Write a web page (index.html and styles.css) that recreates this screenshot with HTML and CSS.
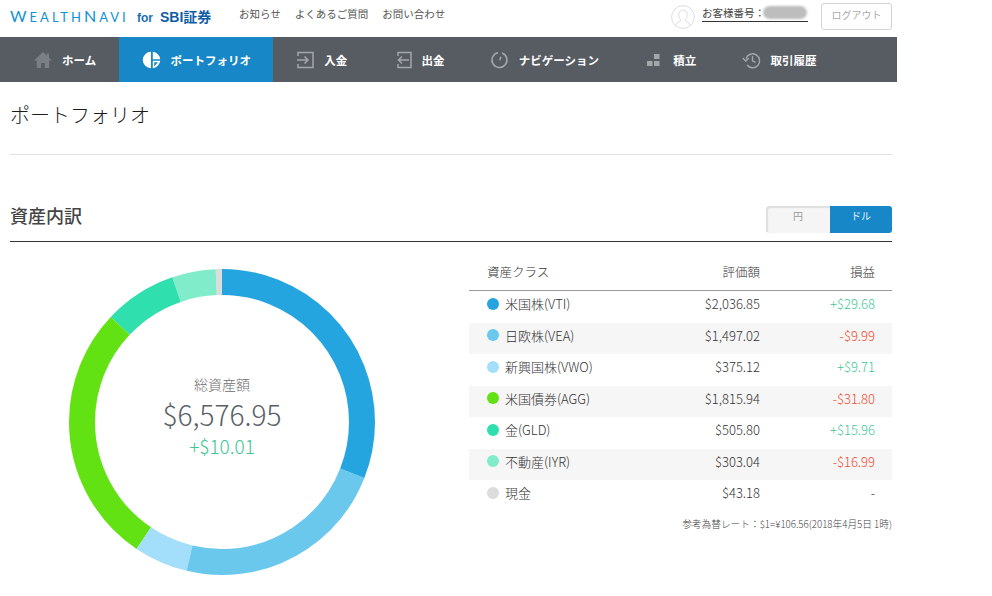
FILE: index.html
```html
<!DOCTYPE html>
<html lang="ja">
<head>
<meta charset="utf-8">
<title>ポートフォリオ</title>
<link rel="stylesheet" href="styles.css">
</head>
<body>
<div class="page">
  <header class="topbar">
    <div class="logo"><span class="wn">W<small>EALTH</small>N<small>AVI</small></span><span class="for">for</span><span class="sbi">SBI証券</span></div>
    <nav class="sublinks"><a>お知らせ</a><a>よくあるご質問</a><a>お問い合わせ</a></nav>
    <div class="account">
      <svg class="avatar" viewBox="0 0 24 24" width="24" height="24" fill="none" stroke="#cfcfcf" stroke-width="0.7"><circle cx="12" cy="12" r="11.4"/><path d="M5 20.500c.3-2.500 1.500-3 3.500-3.700 1.200-.5 1.500-1 1.300-2-1.300-1.300-2-3-2-5 0-2.800 1.700-4.800 4.200-4.800s4.200 2 4.200 4.800c0 2-.7 3.700-2 5-.2 1 .1 1.500 1.300 2 2 .7 3.200 1.200 3.500 3.700"/></svg>
      <span class="cust"><span class="custlabel">お客様番号：</span><i class="mask"></i></span>
      <button class="logout">ログアウト</button>
    </div>
  </header>
  <nav class="mainnav">
    <a class="item first"><svg class="ic" viewBox="0 0 18 18" fill="#7b7f84"><path d="M9 1 0 9.500h2.800V17h4.400v-5h3.600v5h4.400V9.500H18l-3-2.800V2.500h-2.200v2.100z"/></svg>ホーム</a>
    <a class="item active"><svg class="ic" viewBox="0 0 18 18"><path fill="#fff" d="M8 .8v16.400A8.200 8.200 0 0 1 8 .8zM9.800.8a8.200 8.200 0 0 1 7.400 7.400H9.800z"/><path fill="#fff" fill-rule="evenodd" d="M9.800 9.800h7.400a8.200 8.200 0 0 1-7.400 7.400zM11.200 11.200v4.400l3.800-4.400z"/></svg>ポートフォリオ</a>
    <a class="item"><svg class="ic" viewBox="0 0 18 18" fill="none" stroke="#a4a7aa" stroke-width="1.500"><path d="M1 5V1.500h15v15H1V13"/><path d="M0 9h10.500M7.500 5.500 11 9l-3.500 3.500"/></svg>入金</a>
    <a class="item"><svg class="ic" viewBox="0 0 18 18" fill="none" stroke="#a4a7aa" stroke-width="1.500"><path d="M4 5V1.500h13v15H4V13"/><path d="M15 9H4.500M8 5.500 4.500 9 8 12.500"/></svg>出金</a>
    <a class="item"><svg class="ic" viewBox="1.500 0 18 18" fill="none" stroke="#a4a7aa" stroke-width="1.500"><path d="M7.500 1.700A7.500 7.500 0 1 0 11.500 2"/><path d="M10.300 5.800 9.300 9.300"/></svg>ナビゲーション</a>
    <a class="item"><svg class="ic" viewBox="0 0 18 18" fill="#a4a7aa"><rect x="1" y="10" width="5.500" height="5"/><rect x="8" y="10" width="5.500" height="5"/><rect x="8" y="3" width="5.500" height="5"/></svg>積立</a>
    <a class="item"><svg class="ic" viewBox="1 0 18 18" fill="none" stroke="#a4a7aa" stroke-width="1.400"><path d="M4 7.500A7 7 0 1 1 5 14"/><path d="M.8 7 3.700 10 6.700 7.200M10.500 5v4.800l3 1.500"/></svg>取引履歴</a>
  </nav>
  <main class="content">
    <h1 class="title">ポートフォリオ</h1>
    <div class="sechead">
      <h2>資産内訳</h2>
      <div class="toggle"><span class="yen">円</span><span class="usd">ドル</span></div>
    </div>
    <div class="body">
      <div class="donut">
        <svg viewBox="0 0 306 306" width="306" height="306" fill="none" stroke-width="26">
          <g transform="rotate(-90 153 153)">
            <circle cx="153" cy="153" r="140" pathLength="100" stroke="#dcdcdc" stroke-dasharray="0.66 99.34" stroke-dashoffset="0.66"/>
            <circle cx="153" cy="153" r="140" pathLength="100" stroke="#80ecca" stroke-dasharray="4.61 95.39" stroke-dashoffset="5.27"/>
            <circle cx="153" cy="153" r="140" pathLength="100" stroke="#30dfae" stroke-dasharray="7.69 92.31" stroke-dashoffset="12.96"/>
            <circle cx="153" cy="153" r="140" pathLength="100" stroke="#62e212" stroke-dasharray="27.61 72.39" stroke-dashoffset="40.57"/>
            <circle cx="153" cy="153" r="140" pathLength="100" stroke="#a3dffb" stroke-dasharray="5.70 94.30" stroke-dashoffset="46.27"/>
            <circle cx="153" cy="153" r="140" pathLength="100" stroke="#6bc8ed" stroke-dasharray="22.76 77.24" stroke-dashoffset="69.03"/>
            <circle cx="153" cy="153" r="140" pathLength="100" stroke="#25a5df" stroke-dasharray="30.97 69.03"/>
          </g>
        </svg>
        <div class="center">
          <div class="lbl">総資産額</div>
          <div class="total">$6,576.95</div>
          <div class="delta">+$10.01</div>
        </div>
      </div>
      <div class="side">
        <div class="thead"><span class="name">資産クラス</span><span class="val">評価額</span><span class="pl">損益</span></div>
        <div class="row"><span class="name"><i class="dot c1"></i>米国株(VTI)</span><span class="val">$2,036.85</span><span class="pl up">+$29.68</span></div>
        <div class="row alt"><span class="name"><i class="dot c2"></i>日欧株(VEA)</span><span class="val">$1,497.02</span><span class="pl down">-$9.99</span></div>
        <div class="row"><span class="name"><i class="dot c3"></i>新興国株(VWO)</span><span class="val">$375.12</span><span class="pl up">+$9.71</span></div>
        <div class="row alt"><span class="name"><i class="dot c4"></i>米国債券(AGG)</span><span class="val">$1,815.94</span><span class="pl down">-$31.80</span></div>
        <div class="row"><span class="name"><i class="dot c5"></i>金(GLD)</span><span class="val">$505.80</span><span class="pl up">+$15.96</span></div>
        <div class="row alt"><span class="name"><i class="dot c6"></i>不動産(IYR)</span><span class="val">$303.04</span><span class="pl down">-$16.99</span></div>
        <div class="row"><span class="name"><i class="dot c7"></i>現金</span><span class="val">$43.18</span><span class="pl">-</span></div>
        <p class="note">参考為替レート：$1=¥106.56(2018年4月5日 1時)</p>
      </div>
    </div>
  </main>
</div>
</body>
</html>
```
FILE: styles.css
```css
* { box-sizing: border-box; }
html, body { margin: 0; padding: 0; background: #fff; }
body { font-family: "Noto Sans CJK JP", "Noto Sans", sans-serif; color: #444; overflow: hidden; }
.page { width: 897px; }

.topbar { height: 37px; display: flex; align-items: flex-start; }
.logo { width: 239px; padding: 8px 0 0 10px; display: flex; align-items: baseline; font-family: "Liberation Sans", "Noto Sans CJK JP", sans-serif; line-height: 16px; white-space: nowrap; }
.wn { font-family: Lato, "Liberation Sans", sans-serif; font-weight: 400; font-size: 16px; letter-spacing: 3px; width: 127px; color: #1291d6; }
.wn small { font-size: 13px; }
.for { font-size: 12px; font-weight: bold; width: 23px; color: #1a6fb0; }
.sbi { font-size: 14px; font-weight: bold; color: #0f5da5; }
.sublinks { display: flex; gap: 14px; font-size: 10.500px; line-height: 14px; padding-top: 7px; color: #555; }
.account { margin-left: auto; width: 226px; padding-right: 5px; display: flex; align-items: flex-start; padding-top: 3px; }
.avatar { margin: 2px 7px 0 0; flex: none; }
.cust { flex: none; width: 106px; height: 16px; font-size: 10.500px; line-height: 14px; margin-top: 3px; border-bottom: 1px solid #333; color: #444; display: flex; margin-right: 13px; white-space: nowrap; }
.custlabel { flex: none; }
.mask { flex: none; width: 44px; height: 13px; margin: 0 0 0 -2px; background: #bdbdbd; border-radius: 7px; filter: blur(1px); }
.logout { width: 71px; height: 27px; padding: 0 0 3px; border: 1px solid #d4d4d4; border-radius: 3px; background: #fff; color: #aaa; font: 10px/1 "Noto Sans CJK JP", sans-serif; }

.mainnav { height: 45px; background: #575c63; display: flex; padding-left: 10px; }
.item { display: flex; align-items: center; padding: 0 23px 0 24.250px; gap: 9px; color: #fff; font-size: 11.500px; font-weight: bold; white-space: nowrap; }
.item.first { padding-left: 24px; gap: 10px; }
.item.active { background: #1787c7; padding-right: 22px; }
.ic { width: 18px; height: 18px; flex: none; overflow: visible; }

.content { padding: 0 5px 0 10px; }
.title { margin: 0; height: 73px; padding-top: 19px; border-bottom: 1px solid #e0e0e0; font-size: 20px; line-height: 28px; font-weight: 300; color: #1c1c1c; }
.sechead { height: 87px; border-bottom: 1px solid #333; display: flex; justify-content: space-between; align-items: flex-start; padding-top: 51px; }
.sechead h2 { margin: -3px 0 0; font-size: 18px; line-height: 24px; font-weight: 500; color: #444; }
.toggle { display: flex; width: 126px; height: 27px; border-radius: 3px; overflow: hidden; font-size: 10px; text-align: center; line-height: 20px; }
.yen { width: 64px; background: #f5f5f5; color: #999; box-shadow: inset 2px 2px 1px #dfdfdf; border-radius: 3px 0 0 3px; }
.usd { flex: 1; background: #1787c7; color: #e6f3fa; }

.body { display: flex; align-items: flex-start; }
.donut { display: grid; margin: 27px 0 0 59px; width: 306px; height: 306px; }
.donut svg, .center { grid-area: 1 / 1; }
.center { text-align: center; padding-top: 105px; }
.lbl { font-size: 14px; line-height: 21px; color: #6c6c6c; font-weight: 300; }
.total { font-size: 28px; line-height: 38px; color: #5a5f66; font-weight: 300; }
.delta { font-size: 19px; line-height: 26px; color: #3ec795; font-weight: 300; }

.side { width: 423px; margin-left: 94px; padding-top: 14px; font-size: 13px; font-weight: 300; }
.thead, .row { display: grid; grid-template-columns: 177px 114px 115px; padding-right: 17px; align-items: center; color: #333; }
.thead { height: 35px; border-bottom: 1px solid #999; padding-bottom: 3px; font-size: 12.500px; }
.row { height: 31.500px; padding-bottom: 6px; }
.alt { background: #f6f6f6; }
.name { padding-left: 18px; display: flex; align-items: center; }
.val, .pl { text-align: right; }
.up { color: #3ec795; }
.down { color: #f04a30; }
.dot { width: 12px; height: 12px; border-radius: 50%; margin-right: 6px; flex: none; }
.c1 { background: #25a5df; }
.c2 { background: #6bc8ed; }
.c3 { background: #a3dffb; }
.c4 { background: #62e212; }
.c5 { background: #30dfae; }
.c6 { background: #80ecca; }
.c7 { background: #dcdcdc; }
.note { margin: 5px 0 0; text-align: right; font-size: 9.700px; line-height: 14px; color: #444; white-space: nowrap; }
```
